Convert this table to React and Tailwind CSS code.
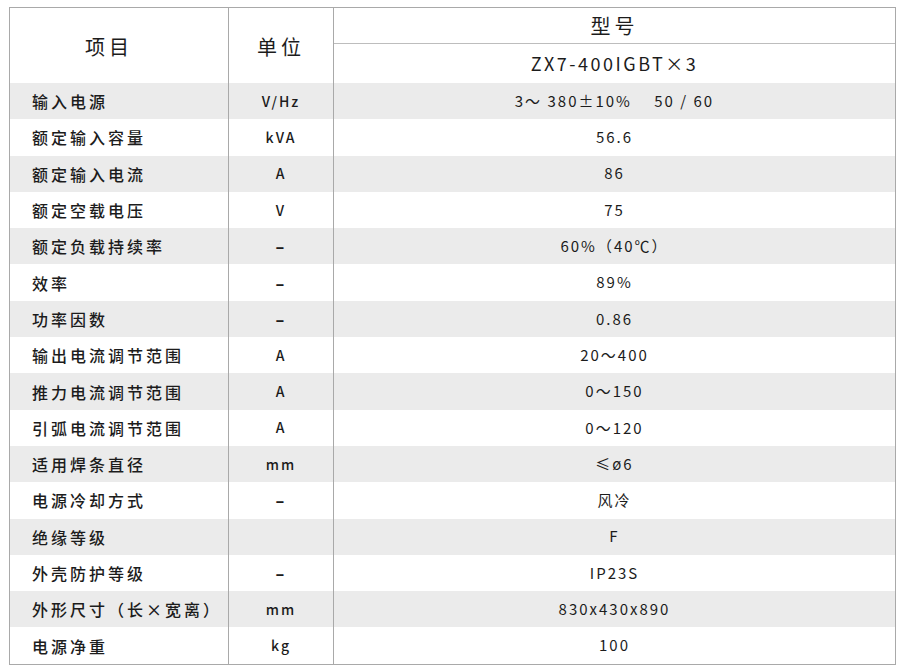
import React from "react";

const rows = [
  ["输入电源", "V/Hz", "3～ 380±10%　 50 / 60"],
  ["额定输入容量", "kVA", "56.6"],
  ["额定输入电流", "A", "86"],
  ["额定空载电压", "V", "75"],
  ["额定负载持续率", "-", "60%（40℃）"],
  ["效率", "-", "89%"],
  ["功率因数", "-", "0.86"],
  ["输出电流调节范围", "A", "20～400"],
  ["推力电流调节范围", "A", "0～150"],
  ["引弧电流调节范围", "A", "0～120"],
  ["适用焊条直径", "mm", "≤ø6"],
  ["电源冷却方式", "-", "风冷"],
  ["绝缘等级", "", "F"],
  ["外壳防护等级", "-", "IP23S"],
  ["外形尺寸（长×宽离）", "mm", "830x430x890"],
  ["电源净重", "kg", "100"],
];

const font = { fontFamily: '"Noto Sans CJK SC", "DejaVu Sans", sans-serif' };

function App() {
  return (
    <div className="w-[902px] h-[671px] bg-white pt-[7px] pl-[9px]" style={font}>
      <div className="w-[887px] border border-[#a9a9a9] text-[#1c1c1c]">
        <div className="grid grid-cols-[219px_105px_1fr] h-[75px]">
          <div className="border-r border-[#a9a9a9] flex items-center pl-[75px] pt-[3px] text-[20px] tracking-[4px]">
            项目
          </div>
          <div className="border-r border-[#a9a9a9] flex items-center justify-center pt-[3px] text-[20px] tracking-[4px]">
            单位
          </div>
          <div className="flex flex-col">
            <div className="h-[36px] border-b border-[#bdbdbd] flex items-center justify-center text-[20px] tracking-[4px]">
              型号
            </div>
            <div className="flex-1 flex items-center justify-center text-[18px] tracking-[2.5px]">
              ZX7-400IGBT×3
            </div>
          </div>
        </div>
        {rows.map(([name, unit, value], i) => (
          <div
            key={name}
            className={
              "grid grid-cols-[219px_105px_1fr] h-[36.3px] " +
              (i % 2 === 0 ? "bg-[#ebebeb]" : "bg-white")
            }
          >
            <div className="border-r border-[#a9a9a9] flex items-center pl-[22px] text-[16px] font-medium tracking-[3px] whitespace-nowrap">
              {name}
            </div>
            <div className="border-r border-[#a9a9a9] flex items-center justify-center text-[14px] font-medium tracking-[2px]">
              {unit === "-" ? <span className="font-black text-[16px]">–</span> : unit}
            </div>
            <div className="flex items-center justify-center text-[15px] tracking-[2px] whitespace-pre">
              {value}
            </div>
          </div>
        ))}
      </div>
    </div>
  );
}

export default App;
